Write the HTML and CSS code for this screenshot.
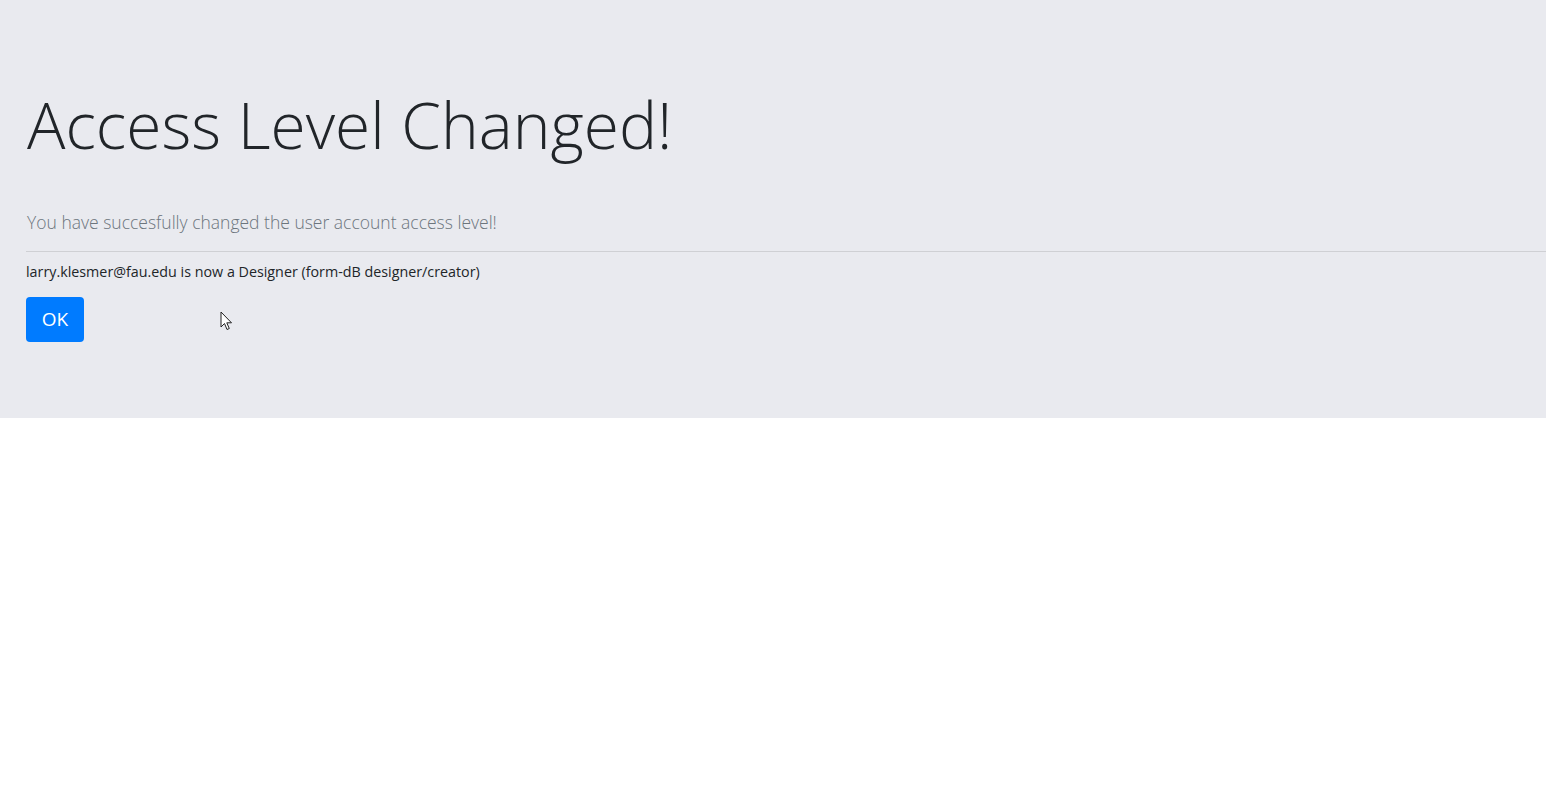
FILE: index.html
```html
<!DOCTYPE html>
<html lang="en">
<head>
<meta charset="utf-8">
<title>Access Level Changed</title>
<link rel="stylesheet" href="styles.css">
</head>
<body>
<div class="jumbotron">
  <h1 class="display">Access Level Changed!</h1>
  <p class="lead">You have succesfully changed the user account access level!</p>
  <hr class="divider">
  <p class="info">larry.klesmer@fau.edu is now a Designer (form-dB designer/creator)</p>
  <div class="actions">
    <a class="btn-ok" href="#">OK</a>
    <svg class="cursor" width="14" height="20" viewBox="0 0 14 20"><path d="M1 1 L1 16 L4.5 12.5 L7 18.5 L9.3 17.5 L6.8 11.8 L11.5 11.8 Z" fill="#fff" stroke="#222" stroke-width="1" stroke-linejoin="round"/></svg>
  </div>
</div>
</body>
</html>
```
FILE: styles.css
```css
html, body {
  margin: 0;
  padding: 0;
  background: #ffffff;
}
body {
  font-family: "Open Sans", "Noto Sans", sans-serif;
  color: #212529;
}
.jumbotron {
  background: #e9eaef;
  height: 418px;
  box-sizing: border-box;
  padding: 77px 0 0 27px;
  display: flex;
  flex-direction: column;
  align-items: flex-start;
}
.display {
  margin: 0;
  font-weight: 300;
  font-size: 64px;
  line-height: 96px;
  color: #212529;
  letter-spacing: 0;
}
.lead {
  margin: 35px 0 0 0;
  font-size: 17.5px;
  font-weight: 300;
  line-height: 28px;
  color: #6c757d;
}
.divider {
  align-self: stretch;
  margin: 15px 0 0 -1px;
  border: 0;
  border-top: 1px solid #cfd0d4;
  height: 0;
}
.info {
  margin: 10px 0 0 -1px;
  font-size: 14.3px;
  line-height: 20px;
}
.actions {
  margin: 15px 0 0 -1px;
  position: relative;
  display: flex;
}
.btn-ok {
  display: inline-block;
  width: 58px;
  height: 45px;
  box-sizing: border-box;
  line-height: 45px;
  text-align: center;
  background: #007bff;
  color: #ffffff;
  font-size: 19px;
  text-decoration: none;
  border-radius: 4px;
}
.cursor {
  position: absolute;
  left: 194px;
  top: 14px;
}
```
